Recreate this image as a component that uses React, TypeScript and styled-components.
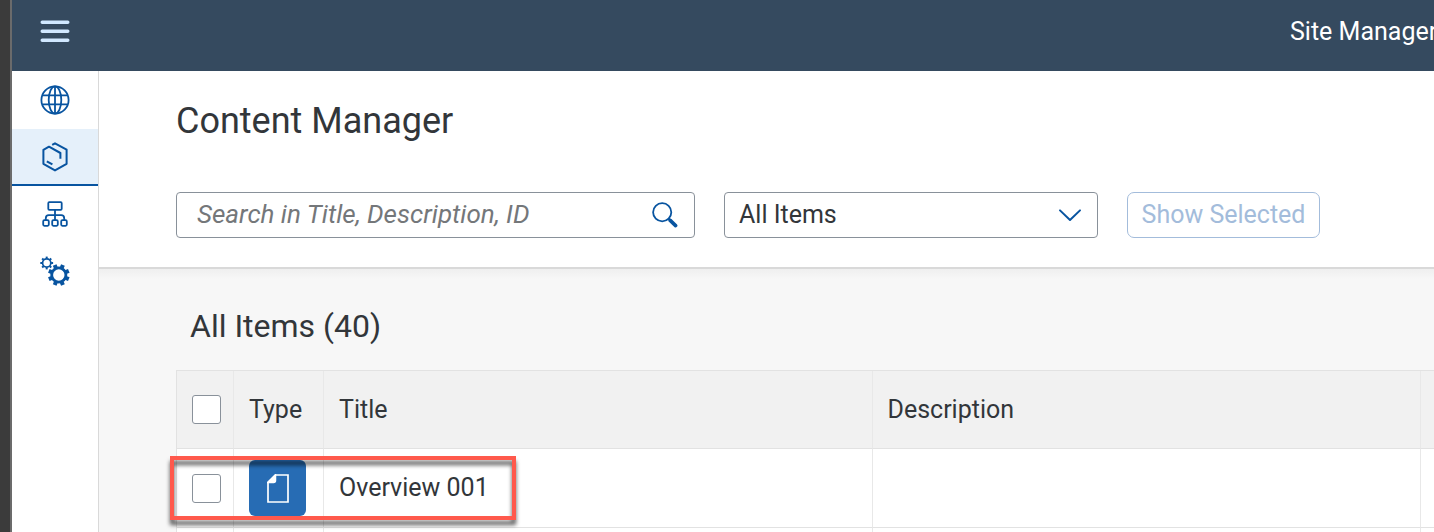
import React from "react";
import styled, { createGlobalStyle } from "styled-components";

const GlobalStyle = createGlobalStyle`
  *, *::before, *::after { box-sizing: border-box; }
  body {
    margin: 0;
    background: #f7f7f7;
    color: #32363a;
    font-family: Roboto, "Noto Sans", sans-serif;
    font-size: 25px;
    line-height: 30px;
  }
  button, input, select { font: inherit; }
`;

const Frame = styled.div`
  display: flex;
  flex-direction: column;
  min-height: 100vh;
  border-left: 10px solid #3b3b3b;
  overflow: hidden;
`;

const Shell = styled.div`
  flex: 1;
  display: flex;
  flex-direction: column;
  border-left: 2px solid #6b6b6b;
`;

const ShellBar = styled.header`
  display: flex;
  align-items: center;
  justify-content: space-between;
  height: 71px;
  padding-bottom: 8px;
  background: #354a5f;
  color: #fff;
`;

const MenuButton = styled.button`
  display: flex;
  justify-content: center;
  width: 86px;
  padding: 8px 0 10px;
  border: 0;
  background: none;
`;

const ProductTitle = styled.div`
  width: 144px;
  white-space: nowrap;
`;

const Body = styled.div`
  flex: 1;
  display: flex;
`;

const SideNav = styled.nav`
  flex: none;
  display: flex;
  flex-direction: column;
  width: 87px;
  padding-top: 1px;
  background: #fff;
  border-right: 1px solid #d9d9d9;
`;

const NavLink = styled.a<{ $active?: boolean }>`
  display: flex;
  align-items: center;
  justify-content: center;
  height: 57px;
  padding-bottom: 2px;
  color: #0854a0;
  background: ${(p) => (p.$active ? "#e5f0fa" : "transparent")};
  box-shadow: ${(p) => (p.$active ? "inset 0 -2px #0854a0" : "none")};
`;

const Page = styled.main`
  flex: 1;
  min-width: 0;
`;

const PageHeader = styled.section`
  padding: 30px 77px 29px;
  background: #fff;
  border-bottom: 2px solid #d9d9d9;
`;

const PageTitle = styled.h1`
  margin: 0 0 51px;
  font-size: 36px;
  line-height: 40px;
  font-weight: 400;
`;

const FilterBar = styled.div`
  display: flex;
  gap: 29px;
`;

const Field = styled.div<{ $width: number }>`
  display: flex;
  align-items: center;
  flex: 0 1 ${(p) => p.$width}px;
  min-width: 0;
  height: 46px;
  border: 1px solid #89919a;
  border-radius: 4px;
  background: #fff;
`;

const SearchInput = styled.input`
  flex: 1;
  min-width: 0;
  height: 44px;
  padding: 0 0 2px 20px;
  border: 0;
  outline: 0;
  background: none;
  color: #32363a;
  font-size: 26px;
  &::placeholder {
    color: #74777a;
    font-style: italic;
    opacity: 1;
  }
`;

const SearchButton = styled.button`
  display: flex;
  padding: 0 16px 0 8px;
  border: 0;
  background: none;
  color: #0854a0;
`;

const Chevron = styled.svg`
  flex: none;
  margin: 0 15px 0 -39px;
  pointer-events: none;
`;

const Select = styled.select`
  appearance: none;
  flex: 1;
  min-width: 0;
  height: 44px;
  padding: 0 40px 0 14px;
  border: 0;
  outline: 0;
  background: none;
  color: #32363a;
`;

const ActionButton = styled.button`
  flex: none;
  height: 46px;
  width: 193px;
  padding: 0;
  border: 1px solid #a3bcdb;
  border-radius: 7px;
  background: #fff;
  color: #a3bcdb;
  white-space: nowrap;
`;

const Content = styled.section`
  padding: 37px 0 0 77px;
  background: linear-gradient(#efefef, #f7f7f7 10px);
`;

const TableTitle = styled.h2`
  margin: 0 0 24px 14px;
  font-size: 32px;
  line-height: 40px;
  font-weight: 400;
`;

const Table = styled.table`
  width: 100%;
  table-layout: fixed;
  border-collapse: separate;
  border-spacing: 0;
  border-top: 1px solid #e2e2e2;
  border-left: 1px solid #e2e2e2;
`;

const Col = styled.col<{ $width?: number }>`
  width: ${(p) => (p.$width ? `${p.$width}px` : "auto")};
`;

const HeadCell = styled.th`
  height: 78px;
  padding: 0 15px;
  text-align: left;
  font-weight: 400;
  background: #f1f1f1;
  border-right: 1px solid #e8e8e8;
  border-bottom: 1px solid #e2e2e2;
`;

const Cell = styled.td`
  height: 79px;
  padding: 0 15px;
  background: #fff;
  border-right: 1px solid #e8e8e8;
  border-bottom: 1px solid #e2e2e2;
`;

const MarkedCell = styled(Cell)`
  position: relative;
`;

const EndHeadCell = styled(HeadCell)`
  padding: 0;
  border-right: 0;
`;

const EndCell = styled(Cell)`
  padding: 0;
  border-right: 0;
`;

const Check = styled.input`
  appearance: none;
  display: block;
  width: 29px;
  height: 29px;
  margin: 0;
  border: 1px solid #89919a;
  border-radius: 3px;
  background: #fff;
  &:checked { background: #0854a0; }
`;

const TypeTile = styled.div`
  display: flex;
  align-items: center;
  justify-content: center;
  width: 57px;
  height: 56px;
  border-radius: 6px;
  background: #276cb4;
`;

const Highlight = styled.div`
  position: absolute;
  z-index: 1;
  top: 7px;
  left: -7px;
  width: 346px;
  height: 64px;
  border: 4px solid #ff594c;
  filter: drop-shadow(0 5px 2px rgba(0, 0, 0, 0.65));
  pointer-events: none;
`;

const Menu = () => (
  <svg width="30" height="24" viewBox="0 0 30 24" stroke="#d1e8ff" strokeWidth="3.4" strokeLinecap="round">
    <path d="M2.2 3.2H27.8M2.2 12.2H27.8M2.2 21.2H27.8" />
  </svg>
);

const Globe = () => (
  <svg width="30" height="30" viewBox="0 0 30 30" fill="none" stroke="currentColor" strokeWidth="1.8">
    <circle cx="15" cy="15" r="13.6" />
    <ellipse cx="15" cy="15" rx="6.3" ry="13.6" />
    <path d="M15 1.4V28.6M2.4 10.4H27.6M2.4 19.4H27.6" />
  </svg>
);

const Cube = () => (
  <svg width="26" height="30" viewBox="0 0 26 30" fill="none" stroke="currentColor" strokeWidth="2" strokeLinejoin="round">
    <path d="M10.2 2.8L13 1.3L24.6 7.6V21.8L13 28.4L1.4 21.8V7.8L7 4.7L18.4 11V16.8M4.8 19.3L10.4 22.4" />
  </svg>
);

const Hierarchy = () => (
  <svg width="26" height="26" viewBox="0 0 26 26" fill="none" stroke="currentColor" strokeWidth="1.8">
    <rect x="6.3" y="1.2" width="13.4" height="7.6" rx="1" />
    <rect x="1.2" y="19.2" width="5.6" height="5.6" rx="1.2" />
    <rect x="10.2" y="19.2" width="5.6" height="5.6" rx="1.2" />
    <rect x="19.2" y="19.2" width="5.6" height="5.6" rx="1.2" />
    <path d="M13 8.8V19.2M3.8 19.2V17.2Q3.8 14.2 6.8 14.2H19.2Q22.2 14.2 22.2 17.2V19.2" />
  </svg>
);

const teeth = [0, 45, 90, 135, 180, 225, 270, 315];

const Gears = () => (
  <svg width="30" height="30" viewBox="0 0 30 30" fill="none" stroke="currentColor">
    <circle cx="6.7" cy="7" r="4.1" strokeWidth="1.7" />
    {teeth.map((a) => (
      <path key={a} d="M6.7 2.6V.6" strokeWidth="2" transform={`rotate(${a} 6.7 7)`} />
    ))}
    <circle cx="18.8" cy="19" r="7.1" strokeWidth="2.8" />
    {teeth.map((a) => (
      <path key={a} d="M18.8 11.5V8.2" strokeWidth="4" transform={`rotate(${a + 22.5} 18.8 19)`} />
    ))}
  </svg>
);

const Magnifier = () => (
  <svg width="26" height="26" viewBox="0 0 26 26" fill="none" stroke="currentColor" strokeLinecap="round">
    <circle cx="10.2" cy="10.2" r="9.1" strokeWidth="1.8" />
    <path d="M17 17L18.6 18.6" strokeWidth="2.4" />
    <path d="M18.2 18.4L23.6 23.6" strokeWidth="3.6" />
  </svg>
);

const PageIcon = () => (
  <svg width="22" height="29" viewBox="0 0 22 29" fill="none" stroke="#fff" strokeWidth="1.7">
    <path d="M8.4 1H21V28H1V8.4Z" />
    <path d="M8.4 1V6.6Q8.4 8.4 6.6 8.4H1Z" fill="#fff" />
  </svg>
);

export default function App() {
  return (
    <>
      <GlobalStyle />
      <Frame>
        <Shell>
          <ShellBar>
            <MenuButton aria-label="Menu">
              <Menu />
            </MenuButton>
            <ProductTitle>Site Manager</ProductTitle>
          </ShellBar>
          <Body>
            <SideNav>
              <NavLink href="#sites" aria-label="Site Directory"><Globe /></NavLink>
              <NavLink href="#content" aria-label="Content Manager" aria-current="page" $active><Cube /></NavLink>
              <NavLink href="#channels" aria-label="Channel Manager"><Hierarchy /></NavLink>
              <NavLink href="#settings" aria-label="Settings"><Gears /></NavLink>
            </SideNav>
            <Page>
              <PageHeader>
                <PageTitle>Content Manager</PageTitle>
                <FilterBar>
                  <Field $width={519}>
                    <SearchInput aria-label="Search" placeholder="Search in Title, Description, ID" />
                    <SearchButton aria-label="Search"><Magnifier /></SearchButton>
                  </Field>
                  <Field $width={374}>
                    <Select aria-label="Item type">
                      <option>All Items</option>
                    </Select>
                    <Chevron width="24" height="14" viewBox="0 0 24 14" fill="none" stroke="#0854a0" strokeWidth="2" strokeLinecap="round" strokeLinejoin="round">
                      <path d="M2 2.4L12 12L22 2.4" />
                    </Chevron>
                  </Field>
                  <ActionButton disabled>Show Selected</ActionButton>
                </FilterBar>
              </PageHeader>
              <Content>
                <TableTitle>All Items (40)</TableTitle>
                <Table>
                  <colgroup>
                    <Col $width={57} />
                    <Col $width={90} />
                    <Col />
                    <Col />
                    <Col $width={13} />
                  </colgroup>
                  <thead>
                    <tr>
                      <HeadCell><Check type="checkbox" aria-label="Select all" /></HeadCell>
                      <HeadCell>Type</HeadCell>
                      <HeadCell>Title</HeadCell>
                      <HeadCell>Description</HeadCell>
                      <EndHeadCell />
                    </tr>
                  </thead>
                  <tbody>
                    <tr>
                      <MarkedCell>
                        <Check type="checkbox" aria-label="Select Overview 001" />
                        <Highlight />
                      </MarkedCell>
                      <Cell><TypeTile><PageIcon /></TypeTile></Cell>
                      <Cell>Overview 001</Cell>
                      <Cell />
                      <EndCell />
                    </tr>
                    <tr>
                      <Cell /><Cell /><Cell /><Cell /><EndCell />
                    </tr>
                  </tbody>
                </Table>
              </Content>
            </Page>
          </Body>
        </Shell>
      </Frame>
    </>
  );
}
